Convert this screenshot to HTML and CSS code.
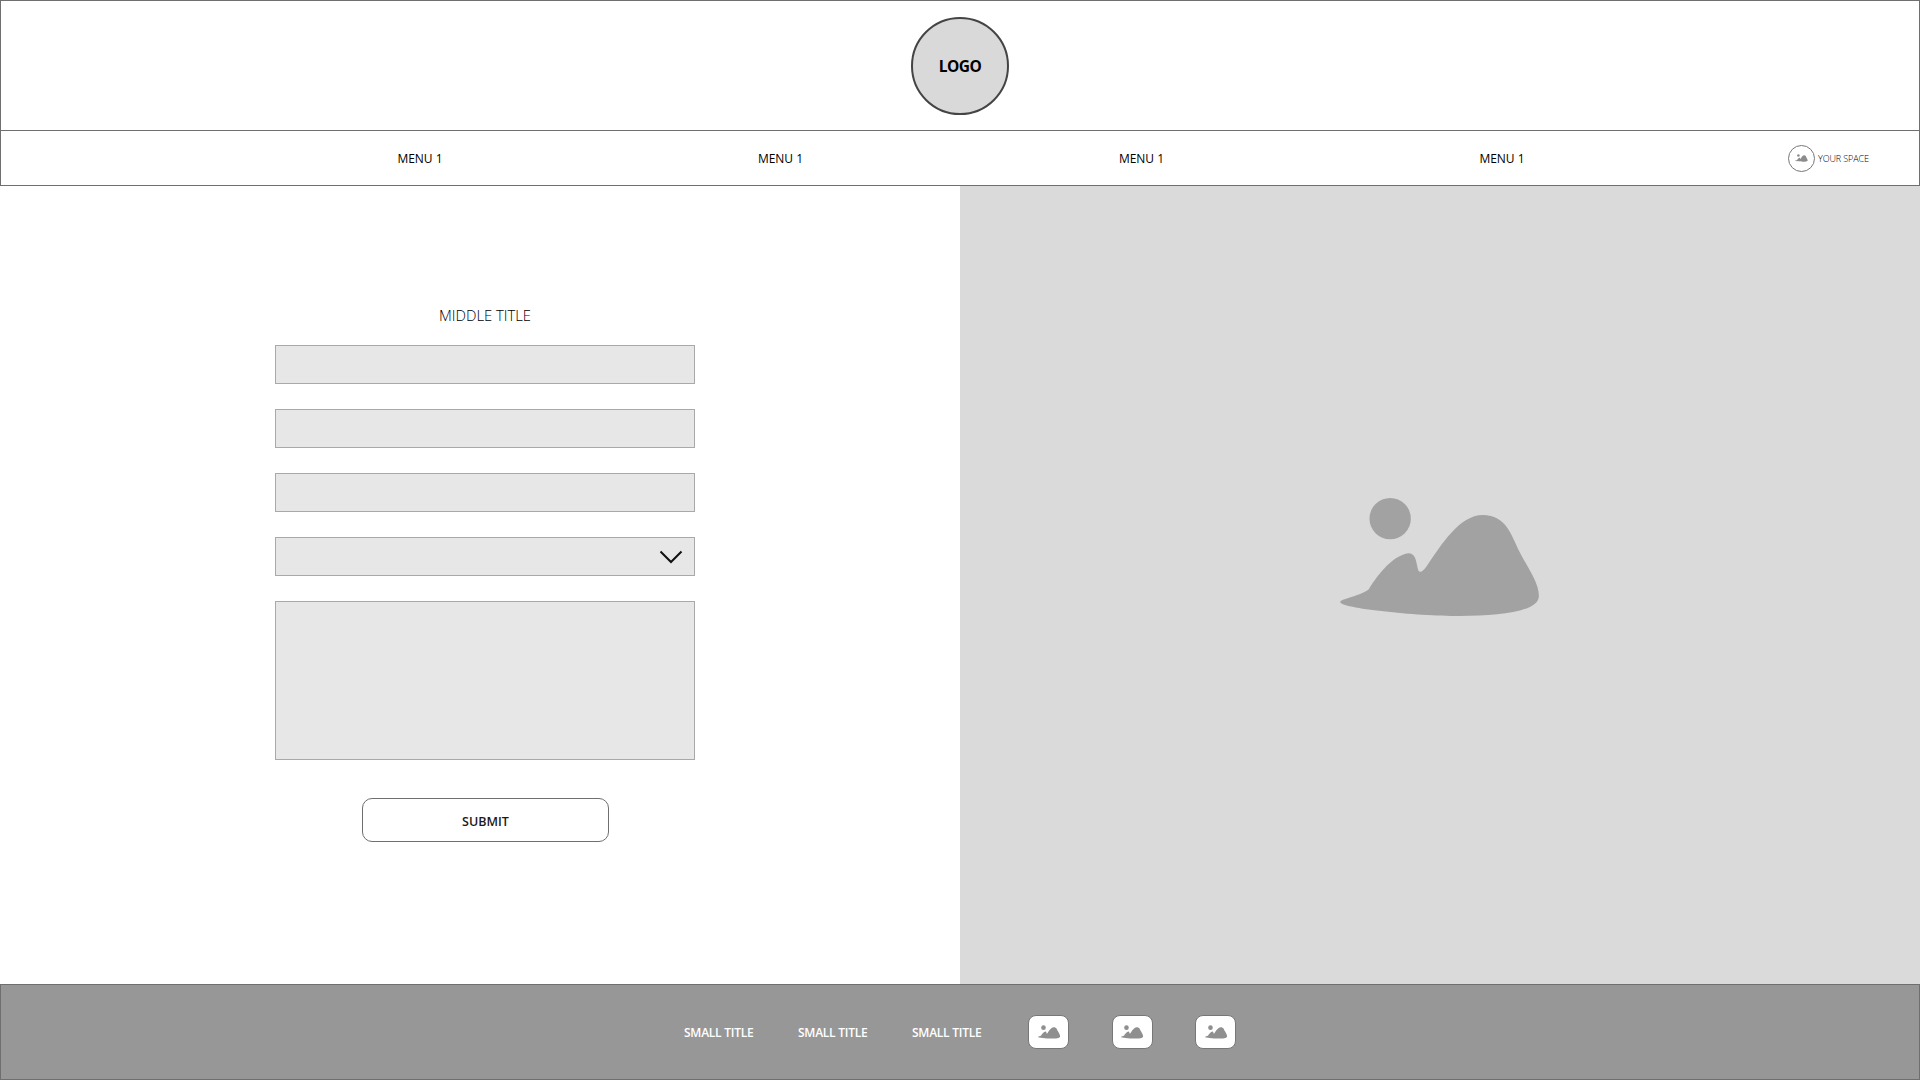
FILE: index.html
```html
<!DOCTYPE html>
<html lang="en">
<head>
<meta charset="utf-8">
<title>Wireframe</title>
<link rel="stylesheet" href="styles.css">
</head>
<body>
<svg class="defs" aria-hidden="true">
  <symbol id="pic" viewBox="50 45 620 375">
    <circle cx="212" cy="116" r="62"/>
    <path d="M62 366C62 358 130 345 148 328C165 300 215 225 268 220C290 220 290 250 296 270C300 280 310 276 322 258C365 195 420 105 490 105C560 105 575 165 600 215C625 265 660 310 658 350C655 395 540 408 420 408C290 408 62 385 62 366Z"/>
  </symbol>
</svg>
<div class="page">
  <header class="top">
    <div class="logo">LOGO</div>
  </header>
  <nav class="nav">
    <a class="menu">MENU 1</a>
    <a class="menu">MENU 1</a>
    <a class="menu">MENU 1</a>
    <a class="menu">MENU 1</a>
    <a class="space">
      <span class="avatar"><svg class="avatar-pic"><use href="#pic"/></svg></span>
      <span class="space-label">YOUR SPACE</span>
    </a>
  </nav>
  <main class="main">
    <section class="form-side">
      <form class="form">
        <h1 class="title">MIDDLE TITLE</h1>
        <input class="field" type="text">
        <input class="field" type="text">
        <input class="field" type="text">
        <div class="field select">
          <svg class="chevron" viewBox="0 0 24 16"><path d="M1.500 2.500L12 13L22.500 2.500"/></svg>
        </div>
        <textarea class="field area"></textarea>
        <button class="submit" type="button">SUBMIT</button>
      </form>
    </section>
    <section class="picture-side">
      <svg class="big-pic"><use href="#pic"/></svg>
    </section>
  </main>
  <footer class="footer">
    <a class="small">SMALL TITLE</a>
    <a class="small">SMALL TITLE</a>
    <a class="small">SMALL TITLE</a>
    <div class="socials">
      <span class="social"><svg class="social-pic"><use href="#pic"/></svg></span>
      <span class="social"><svg class="social-pic"><use href="#pic"/></svg></span>
      <span class="social"><svg class="social-pic"><use href="#pic"/></svg></span>
    </div>
  </footer>
</div>
</body>
</html>
```

FILE: styles.css
```css
* { box-sizing: border-box; }
html, body { margin: 0; padding: 0; }
body { font-family: "Open Sans", "Noto Sans", sans-serif; color: #000; background: #fff; }
.defs { width: 0; height: 0; display: block; overflow: hidden; }
.page { width: 1920px; height: 1080px; display: flex; flex-direction: column; overflow: hidden; }

.top { height: 130px; border: 1px solid #6f6f6f; border-bottom: 0; display: flex; align-items: center; justify-content: center; flex: none; }
.logo { width: 98px; height: 98px; border-radius: 50%; background: #d9d9d9; border: 2px solid #444; display: flex; align-items: center; justify-content: center; font-size: 15.500px; font-weight: 700; letter-spacing: -0.6px; }

.nav { height: 56px; flex: none; border: 1px solid #6f6f6f; display: grid; grid-template-columns: 360px 361px 361px 360px 1fr; padding-left: 239px; align-items: center; font-size: 12px; }
.menu { text-align: center; }
.space { display: flex; align-items: center; padding-left: 106px; }
.avatar { width: 27px; height: 27px; border-radius: 50%; border: 1px solid #777; display: flex; align-items: center; justify-content: center; flex: none; }
.avatar-pic { width: 13px; height: 8px; fill: #8c8c8c; }
.space-label { margin-left: 3px; font-size: 9px; font-weight: 300; white-space: nowrap; letter-spacing: -0.1px; }

.main { flex: 1; display: flex; min-height: 0; }
.form-side { width: 960px; flex: none; padding: 0 0 0 275px; }
.form { width: 420px; padding-top: 118px; display: flex; flex-direction: column; align-items: center; }
.title { margin: 0 0 19px; height: 22px; line-height: 22px; font-size: 14.800px; font-weight: 300; color: #000; }
.field { display: block; width: 100%; height: 39px; margin: 0 0 25px; background: #e7e7e7; border: 1px solid #a9a9a9; border-radius: 0; padding: 0; outline: 0; }
.select { display: flex; align-items: center; justify-content: flex-end; padding-right: 11px; }
.chevron { width: 24px; height: 16px; fill: none; stroke: #111; stroke-width: 2; }
.area { height: 159px; margin-bottom: 38px; resize: none; }
.submit { width: 247px; height: 44px; margin-left: 1px; border: 1px solid #6f6f6f; border-radius: 10px; background: #fff; font: 600 12.500px "Open Sans", "Noto Sans", sans-serif; color: #1a1a1a; padding: 2px 0 0; }

.picture-side { flex: 1; background: #dadada; display: flex; align-items: center; justify-content: center; padding-bottom: 55px; padding-right: 2px; }
.big-pic { width: 207px; height: 125px; fill: #a2a2a2; }

.footer { height: 96px; flex: none; background: #979797; border: 1px solid #6f6f6f; display: flex; align-items: center; padding-left: 683px; color: #fff; font-size: 12px; font-weight: 600; letter-spacing: -0.25px; }
.small { width: 114px; white-space: nowrap; }
.socials { display: flex; gap: 42.500px; margin-left: 2px; }
.social { width: 41px; height: 34px; border-radius: 8px; background: #fff; border: 1px solid #777; display: flex; align-items: center; justify-content: center; }
.social-pic { width: 24px; height: 14px; fill: #8f8f8f; }
```
